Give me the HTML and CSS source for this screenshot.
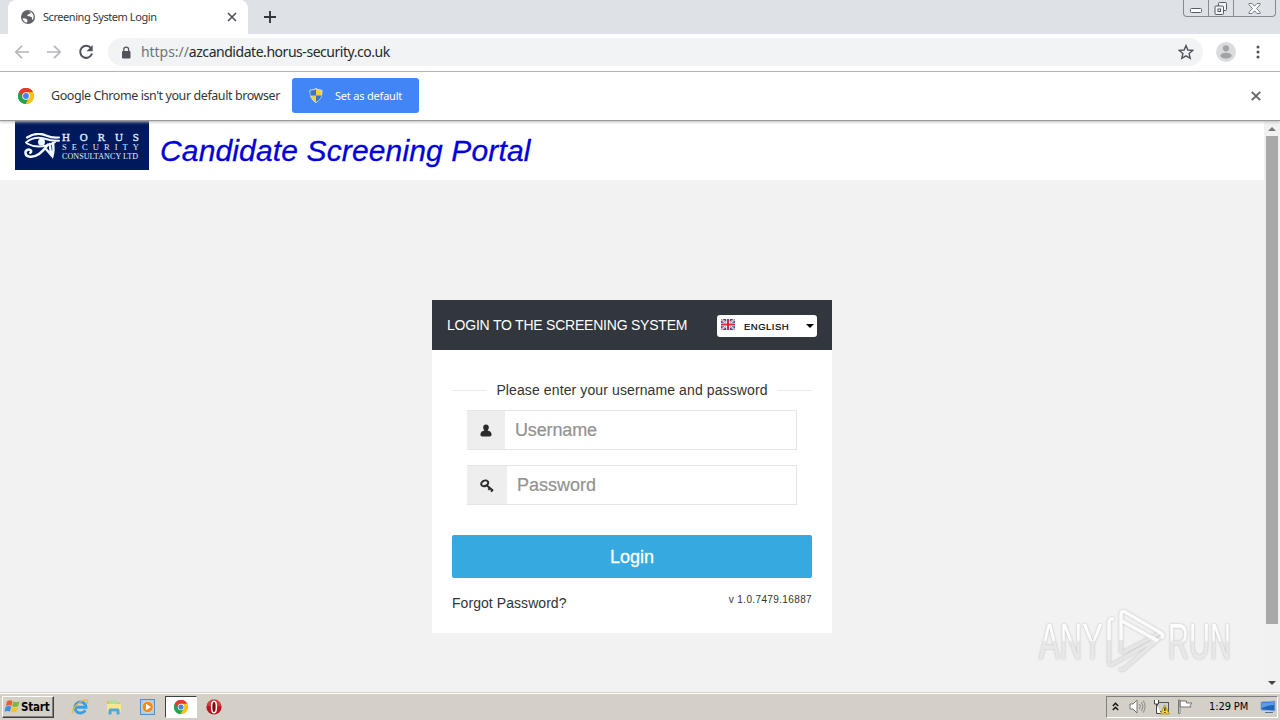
FILE: index.html
```html
<!DOCTYPE html>
<html lang="en">
<head>
<meta charset="utf-8">
<title>Screening System Login</title>
<link rel="stylesheet" href="styles.css">
</head>
<body>
<svg class="defs" width="0" height="0">
  <symbol id="chrome" viewBox="0 0 24 24">
    <path fill="#e33b2e" d="M12 12 1.6 6A12 12 0 0 1 22.4 6z"/>
    <path fill="#fbc116" d="M12 12 22.4 6A12 12 0 0 1 12 24z"/>
    <path fill="#27a34a" d="M12 12v12A12 12 0 0 1 1.6 6z"/>
    <path fill="#e33b2e" d="M12 6.5h10.7A12 12 0 0 0 1.6 6L7 14.5z"/>
    <path fill="#27a34a" d="M1.600 6A12 12 0 0 0 11.500 24L17 14.500 12 17.500 7 14.500z"/>
    <path fill="#fbc116" d="M12 6.5h10.7A12 12 0 0 1 11.5 24l5.5-9.5z"/>
    <circle cx="12" cy="12" r="5.6" fill="#fff"/><circle cx="12" cy="12" r="4.4" fill="#4285e8"/>
  </symbol>
</svg>

<header class="tabstrip">
  <div class="tab">
    <svg class="globe" viewBox="0 0 16 16"><circle cx="8" cy="8" r="7" fill="#5f6368"/><path fill="#fff" d="M2.5 9.2 5.8 9.4 7.4 11l-.3 2.7C4.500 13.300 2.900 11.500 2.500 9.200zM8.500 2.400l2.200.7-.4 1.500-2 .6L7 7 9.500 7.300l2.700 1.200-.3 2.200 1.100-.1c.9-1.900.8-4-.5-6l-1.500-1.500C10.300 2.400 9.400 2.200 8.500 2.400z"/></svg>
    <span class="tab-title">Screening System Login</span>
    <svg class="tab-close" viewBox="0 0 10 10"><path d="M1 1l8 8M9 1 1 9" stroke="#50545a" stroke-width="1.700"/></svg>
  </div>
  <svg class="plus" viewBox="0 0 12 12"><path d="M6 0v12M0 6h12" stroke="#33373c" stroke-width="1.900"/></svg>
  <div class="win-controls">
    <span class="wc wc-min"><svg width="12" height="5" viewBox="0 0 12 5"><rect x=".5" y=".5" width="11" height="4" rx="1" fill="#fff" stroke="#555b66"/></svg></span>
    <span class="wc wc-max"><svg width="14" height="13" viewBox="0 0 14 13"><g fill="#f3f4f6" stroke="#555b66"><rect x="4.500" y=".5" width="8" height="8" rx="1"/><rect x="1" y="4" width="8.500" height="8.500" rx="1"/><rect x="4" y="7" width="2.500" height="2.500"/></g></svg></span>
    <span class="wc wc-close"><svg width="13" height="11" viewBox="0 0 13 11"><path d="M1 .5h3l2.500 2.700L9 .5h3v1.300L8.500 5.500 12 9.200v1.300H9L6.500 7.800 4 10.500H1V9.200l3.500-3.700L1 1.800z" fill="#fff" stroke="#666c76" stroke-width=".9"/></svg></span>
  </div>
</header>

<nav class="toolbar">
  <svg class="nav-ic" viewBox="0 0 16 16"><path d="M15 8H2M8 1.800 1.800 8 8 14.200" fill="none" stroke="#b5b7ba" stroke-width="1.700"/></svg>
  <svg class="nav-ic" viewBox="0 0 16 16"><path d="M1 8h13M8 1.800 14.200 8 8 14.200" fill="none" stroke="#b5b7ba" stroke-width="1.700"/></svg>
  <svg class="nav-ic" viewBox="0 0 16 16"><path d="M13 4.200A6 6 0 1 0 14 9.500" fill="none" stroke="#50545a" stroke-width="2"/><path d="M14.700 1v6.300H8.500z" fill="#50545a"/></svg>
  <div class="omnibox">
    <svg class="lock" viewBox="0 0 10 13"><rect x="1" y="5" width="8.500" height="7.500" rx="1" fill="#50545a"/><path d="M2.800 5.500V3.500a2.400 2.400 0 0 1 4.800 0v2" fill="none" stroke="#50545a" stroke-width="1.300"/></svg>
    <span class="url"><span class="scheme">https://</span>azcandidate.horus-security.co.uk</span>
    <svg class="star" viewBox="0 0 16 16"><path d="M8 1.600 9.900 6l4.800.4-3.600 3.200 1.100 4.700L8 11.800l-4.200 2.500 1.100-4.700L1.300 6.400 6.100 6z" fill="none" stroke="#50545a" stroke-width="1.400"/></svg>
  </div>
  <svg class="avatar" viewBox="0 0 20 20"><circle cx="10" cy="10" r="10" fill="#dadbdc"/><circle cx="10" cy="6.300" r="3.100" fill="#a2a3a5"/><path d="M4.300 14c0-2.500 3-3.300 5.700-3.300s5.700.8 5.700 3.300c-1.200 1.800-3.200 2.600-5.700 2.600S5.500 15.800 4.300 14z" fill="#a2a3a5"/></svg>
  <svg class="kebab" viewBox="0 0 4 14"><g fill="#50545a"><circle cx="2" cy="2" r="1.500"/><circle cx="2" cy="7" r="1.500"/><circle cx="2" cy="12" r="1.500"/></g></svg>
</nav>

<div class="infobar">
  <svg class="info-chrome"><use href="#chrome"/></svg>
  <span class="info-text">Google Chrome isn't your default browser</span>
  <button class="default-btn">
    <svg width="14" height="15" viewBox="0 0 14 15"><path d="M7 .5c2 1.200 4 1.600 6 1.600 0 5.500-1 9.500-6 12.400C2 11.600 1 7.600 1 2.100c2 0 4-.4 6-1.600z" fill="#f5cf3c" stroke="#d9dfe6" stroke-width="1"/><path d="M7 1.200v6.300H1.500C1.300 6 1.400 4 1.400 2.500 3.500 2.500 5 2.200 7 1.200zM7 7.500h5.400c-.6 3-2.400 5-5.400 6.500z" fill="#3378c9"/></svg>
    <span>Set as default</span>
  </button>
  <svg class="info-close" viewBox="0 0 10 10"><path d="M.8.8l8.400 8.400M9.200.8.800 9.200" stroke="#60646a" stroke-width="1.900"/></svg>
</div>

<main class="viewport">
  <div class="page">
    <div class="site-header">
      <div class="logo">
        <svg class="eye" viewBox="0 0 37 27"><g fill="none" stroke="#f2f8ff" stroke-linecap="round"><path d="M3 4.500C9 .8 16-.2 22 2.500c5 2.300 8 2.500 13 2" stroke-width="2.200"/><path d="M2 9.500C7 5.500 14 4 20 5.500c6 2 10 2.800 15 2.200" stroke-width="2"/><path d="M3 10.500c8 4.500 18 3.800 28-1.300" stroke-width="2"/><path d="M24 11.500C19 18.500 12 25 5 23.500c-4.500-1-4.500-6-1-6.800 2.800-.5 4 1.800 2.300 3" stroke-width="2.500"/><path d="M26 11c0 4 .3 8 2.500 12 1.200-4 1.300-8 .5-13M22 16l6 7" stroke-width="2.400"/></g><circle cx="17.500" cy="9" r="3.500" fill="#f2f8ff"/></svg>
        <div class="logo-text">
          <span class="l1"><i>H</i><i>O</i><i>R</i><i>U</i><i>S</i></span>
          <span class="l2"><i>S</i><i>E</i><i>C</i><i>U</i><i>R</i><i>I</i><i>T</i><i>Y</i></span>
          <span class="l3">CONSULTANCY LTD</span>
        </div>
      </div>
      <h1>Candidate Screening Portal</h1>
    </div>
    <section class="card">
      <div class="card-head">
        <span class="card-title">LOGIN TO THE SCREENING SYSTEM</span>
        <div class="lang">
          <svg width="14" height="11" viewBox="0 0 14 11"><rect width="14" height="11" fill="#34459a"/><path d="M0 0l14 11M14 0 0 11" stroke="#fff" stroke-width="1.800"/><path d="M0 0l14 11M14 0 0 11" stroke="#d23b50" stroke-width=".7"/><path d="M7 0v11M0 5.500h14" stroke="#fff" stroke-width="3.600"/><path d="M7 0v11M0 5.500h14" stroke="#d2283e" stroke-width="2"/></svg>
          <span>ENGLISH</span>
          <b class="caret"></b>
        </div>
      </div>
      <div class="card-body">
        <div class="divider"><span>Please enter your username and password</span></div>
        <div class="field field-user">
          <span class="addon"><svg width="12" height="13" viewBox="0 0 12 13"><path d="M6 .5c2 0 3 1.500 2.800 3.300C8.700 5 8.200 6 7.500 6.400 10 6.800 11.500 8 11.600 10.500c0 1.300-.8 2-2 2H2.400c-1.200 0-2-.7-2-2C.500 8 2 6.800 4.500 6.400 3.800 6 3.300 5 3.200 3.800 3 2 4 .5 6 .5z" fill="#2b2b2b"/></svg></span>
          <input type="text" placeholder="Username">
        </div>
        <div class="field field-pass">
          <span class="addon"><svg width="14" height="13" viewBox="0 0 14 13"><g fill="none" stroke="#2b2b2b" stroke-width="2"><ellipse cx="4.700" cy="4.300" rx="3.600" ry="2.700" transform="rotate(-25 4.700 4.300)"/><path d="M6.300 6 12.800 11.500M8.300 10.800l1.800-2M11 12.700l1.800-2"/></g></svg></span>
          <input type="password" placeholder="Password">
        </div>
        <button class="login">Login</button>
        <div class="card-foot"><a>Forgot Password?</a><span class="ver">v 1.0.7479.16887</span></div>
      </div>
    </section>
  </div>
  <div class="scrollbar"><b class="up"></b><span class="thumb"></span><b class="down"></b></div>
  <svg class="watermark" viewBox="0 0 206 70">
    <defs><linearGradient id="wg" gradientUnits="userSpaceOnUse" x1="0" y1="17" x2="0" y2="53"><stop offset="0" stop-color="#fff"/><stop offset=".48" stop-color="#fafafa"/><stop offset=".52" stop-color="#e8e8e8"/><stop offset="1" stop-color="#e9e9e9"/></linearGradient></defs>
    <g class="wm-text"><text x="5" y="53" textLength="64" lengthAdjust="spacingAndGlyphs" fill="url(#wg)">ANY</text><text x="134" y="53" textLength="63" lengthAdjust="spacingAndGlyphs" fill="url(#wg)">RUN</text></g>
    <g class="wm-mark" fill="none" stroke-width="3.500" stroke-linejoin="round"><path stroke="#e6e6e6" d="M75 34v22q0 4 4 2l44-25M87 34v13l0 0M128 30 90 63q-3 2-4-1M88 47l38-20"/><path stroke="#fbfbfb" d="M75 34V17q0-5 5-4M87 34V9q0-5 4-3l36 21q4 3 0 5M88 15l36 20"/></g>
  </svg>
</main>

<footer class="taskbar">
  <div class="start">
    <svg width="17" height="15" viewBox="0 0 17 15"><path d="M3 2.500Q6 .5 8.500 2L7.400 7Q5 5.600 1.800 7z" fill="#e6602b"/><path d="M9.300 2.300Q12 4 15.600 2.200L14.300 7Q11 8.700 8.200 7.200z" fill="#7cb83d"/><path d="M1.600 7.800Q5 6.300 7.200 7.800L6 12.500Q3.500 11.300.5 12.600z" fill="#3f8fdc"/><path d="M8 8Q11 9.600 14.100 7.900L12.800 12.500Q10 14.300 6.800 12.800z" fill="#f5c22f"/></svg>
    <span>Start</span>
  </div>
  <div class="quick">
    <svg class="q" viewBox="0 0 18 18"><path d="M14.300 12.200A5.600 5.600 0 1 1 15 9.300H5" fill="none" stroke="#3d9fde" stroke-width="2.900"/><path d="M1.500 15.500C-.5 12 9 1.500 15.500 1.800c2 .2 1.500 2.500.5 4" fill="none" stroke="#e4ba3a" stroke-width="1.200"/></svg>
    <svg class="q" viewBox="0 0 18 18"><path d="M2 3h5l1 1.500h7V14H2z" fill="#e2c054"/><path d="M4 2h8v5H4z" fill="#b5dda3"/><path d="M2 6h14v8H2z" fill="#f7e592"/><path d="M3.500 16.500v-4q0-2 2-2h7q2 0 2 2v4h-3v-3h-5v3z" fill="#4fa6db"/></svg>
    <svg class="q" viewBox="0 0 18 18"><rect x="1.500" y="1.500" width="14" height="15" fill="#a6cdef" stroke="#5591c9"/><circle cx="8.700" cy="9" r="5.700" fill="#f28a1c" stroke="#fff" stroke-width=".5"/><path d="M7 5.800v6.400L12 9z" fill="#fff"/></svg>
    <div class="active"><svg width="14" height="14"><use href="#chrome"/></svg></div>
    <svg class="q opera" viewBox="0 0 18 18"><circle cx="9" cy="9" r="7.600" fill="#bd1622"/><path d="M2 8a7 7 0 0 1 14 0z" fill="#df5a55" opacity=".6"/><ellipse cx="9" cy="9" rx="2.400" ry="5.700" fill="#7c0b12" stroke="#fff" stroke-width="1.500"/></svg>
  </div>
  <div class="tray">
    <svg width="7" height="9" viewBox="0 0 7 9"><path d="M.8 4 3.500 1.300 6.200 4M.8 8 3.500 5.300 6.200 8" fill="none" stroke="#111" stroke-width="1.400"/></svg>
    <svg class="spk" width="17" height="15" viewBox="0 0 17 15"><path d="M1 5h3l4-4v13l-4-4H1z" fill="#fff" stroke="#777"/><path d="M10.500 5q1.500 2.500 0 5M12.500 3q3 4.500 0 9M14.300 1.500q3.500 6 0 12" fill="none" stroke="#888"/></svg>
    <svg class="net" width="17" height="16" viewBox="0 0 17 16"><rect x="4.500" y="3.500" width="11" height="9" fill="#ccd0ce" stroke="#555"/><path d="M1.500 1v4h4V1M3.500 5v9.500H8" fill="#fff" stroke="#444"/><path d="M11.500 6 16.500 15h-9z" fill="#f7d426" stroke="#9c8410" stroke-width=".7"/><path d="M11.900 8.500v3.500M11.900 13v1" stroke="#222" stroke-width="1.200"/></svg>
    <svg class="flag" width="17" height="15" viewBox="0 0 17 15"><path d="M1.500 1v13.500h1.500V1zM3 2h6.500v2H15l-2 2.500 1 1.500H9V8H3z" fill="#fff" stroke="#777"/></svg>
    <span class="clock">1:29 PM</span>
    <svg class="desk" width="16" height="14" viewBox="0 0 16 14"><path d="M1 2l14-1v10L1 10z" fill="#2262b8" stroke="#8ab1df"/><path d="M2 3l12-1v3Q8 5 2 8z" fill="#609ce0"/><path d="M5 12.500h8" stroke="#547696"/></svg>
  </div>
</footer>
</body>
</html>
```
FILE: styles.css
```css
* { box-sizing: border-box; }
body { margin: 0; width: 1280px; height: 720px; overflow: hidden; display: flex; flex-direction: column; font-family: "Liberation Sans", Arial, sans-serif; background: #fff; }
svg { display: block; flex: none; }
span, h1 { white-space: nowrap; }
.defs { position: absolute; }

.tabstrip { height: 34px; flex: none; background: #dee1e6; display: flex; align-items: center; padding-left: 8px; }
.tab { width: 240px; height: 34px; background: #fff; border-radius: 8px 8px 0 0; display: flex; align-items: center; padding: 0 11px 0 12px; }
.globe { width: 16px; height: 16px; }
.tab-title { margin: -1px 0 0 7px; flex: 1; font: 11px "Noto Sans", sans-serif; letter-spacing: -.44px; color: #33373c; }
.tab-close { width: 10px; height: 10px; }
.plus { width: 12px; height: 12px; margin-left: 16px; }
.win-controls { margin: 0 4px 0 auto; align-self: flex-start; display: flex; height: 17px; width: 93px; border: 1px solid #858a94; border-top: 0; border-radius: 0 0 4px 4px; }
.wc { display: flex; justify-content: center; align-items: center; border-right: 1px solid #858a94; }
.wc-min { width: 25px; padding-top: 5px; }
.wc-max { width: 25px; }
.wc-close { flex: 1; border: 0; }

.toolbar { height: 38px; flex: none; display: flex; align-items: center; padding: 0 18px 1px 14px; border-bottom: 1px solid #b2b4b5; }
.nav-ic { width: 16px; height: 16px; margin-right: 16px; }
.omnibox { width: 1095px; height: 28px; margin-left: -2px; border-radius: 14px; background: #f1f3f4; display: flex; align-items: center; padding: 0 9px 0 13px; }
.lock { width: 10px; height: 13px; }
.url { flex: 1; margin: -2px 0 0 10px; font: 14px "Noto Sans", sans-serif; letter-spacing: -.38px; color: #26292d; }
.scheme { color: #70757a; letter-spacing: -.05px; }
.url { letter-spacing: -.46px; }
.star { width: 16px; height: 16px; }
.avatar { width: 20px; height: 20px; margin-left: 13px; }
.kebab { width: 4px; height: 14px; margin-left: auto; margin-right: 2px; }

.infobar { height: 49px; flex: none; display: flex; align-items: center; padding: 0 19px 1px 18px; border-bottom: 1px solid #999; box-shadow: 0 1px 3px #bbb; position: relative; z-index: 2; }
.info-chrome { width: 16px; height: 16px; }
.info-text { width: 241px; margin-left: 17px; font: 12.5px "Noto Sans", sans-serif; letter-spacing: -.42px; color: #33373c; }
.default-btn { width: 127px; height: 35px; border: 0; border-radius: 3px; background: #4285f4; color: #fff; display: flex; align-items: center; gap: 12px; padding: 0 0 1px 17px; font: 11px "Noto Sans", sans-serif; letter-spacing: -.2px; }
.info-close { width: 10px; height: 10px; margin-left: auto; }

.viewport { flex: 1; min-height: 0; display: flex; position: relative; }
.page { flex: 1; background: #f2f2f2; display: flex; flex-direction: column; }
.site-header { height: 59px; background: #fff; display: flex; padding-left: 15px; }
.logo { width: 134px; height: 49px; background: #00195c; display: flex; color: #e9f2ff; padding: 12px 0 0 9px; }
.eye { width: 37px; height: 27px; }
.logo-text { width: 77px; margin-left: 1px; font-family: "Liberation Serif", serif; display: flex; flex-direction: column; }
.logo-text span { display: flex; justify-content: space-between; }
.logo-text i { font-style: normal; }
.l1 { font-size: 11px; line-height: 9px; -webkit-text-stroke: .3px; }
.l2 { font-size: 8.500px; line-height: 10px; }
.l3 { font-size: 8px; line-height: 9px; letter-spacing: .1px; }
h1 { margin: 11px 0 0 11px; font-size: 30px; line-height: 38px; font-style: italic; font-weight: 400; color: #0000dc; letter-spacing: .14px; -webkit-text-stroke: .3px; }

.card { width: 400px; height: 333px; margin: 120px auto 0; background: #fff; }
.card-head { height: 50px; background: #32363d; display: flex; align-items: center; justify-content: space-between; padding: 0 15px; }
.card-title { color: #fff; font-size: 14px; letter-spacing: -.22px; }
.lang { width: 100px; height: 22px; margin-top: 1px; background: #fff; border-radius: 3px; display: flex; align-items: center; padding: 0 3px 0 4px; font-size: 9.500px; color: #000; letter-spacing: .5px; -webkit-text-stroke: .2px; }
.lang svg { margin-top: -2px; }
.lang span { margin: 1px 0 0 9px; }
.caret { margin-left: auto; border: 4px solid transparent; border-top-color: #000; border-bottom: 0; }
.card-body { padding: 30px 20px 0; display: flex; flex-direction: column; }
.divider { height: 20px; display: flex; align-items: center; gap: 9px; font-size: 14px; color: #333; letter-spacing: .11px; }
.divider::before, .divider::after { content: ""; flex: 1; height: 1px; background: #eaeaea; }
.field { height: 40px; margin: 10px 15px 0; border: 1px solid #e5e5e5; border-left-color: #eee; display: flex; }
.field-pass { margin-top: 15px; }
.addon { width: 37px; padding-right: 2px; background: #eee; display: flex; align-items: center; justify-content: center; }
.field-pass .addon { width: 39px; }
input { flex: 1; min-width: 0; border: 0; background: #fff; padding: 0 10px; font: 18px "Liberation Sans", Arial, sans-serif; }
input::placeholder { color: #929292; opacity: 1; -webkit-text-stroke: .2px; }
.field-user input { letter-spacing: -.15px; }
.login { height: 43px; margin-top: 30px; border: 0; border-radius: 2px; background: #36a9e1; color: #fff; font: 18px "Liberation Sans", Arial, sans-serif; padding: 2px 0 0; -webkit-text-stroke: .3px; }
.card-foot { margin-top: 17px; display: flex; justify-content: space-between; font-size: 14px; line-height: 16px; color: #333; letter-spacing: .06px; }
.ver { font-size: 10px; line-height: 10px; letter-spacing: .37px; }

.scrollbar { width: 16px; background: #f1f1f1; display: flex; flex-direction: column; align-items: center; padding: 6px 0 7px; }
.up { border: 4px solid transparent; border-bottom-color: #777; border-top: 0; }
.thumb { width: 12px; height: 488px; margin-top: 5px; background: #a8a8a8; }
.down { margin-top: auto; border: 4px solid transparent; border-top-color: #444; border-bottom: 0; }
.watermark { position: absolute; left: 1034px; top: 485px; width: 206px; height: 70px; overflow: visible; filter: drop-shadow(0 0 1px #bbb); }
.wm-text { font: 50px "Liberation Sans", sans-serif; }

.taskbar { height: 28px; flex: none; background: #d4d0c8; border-top: 1px solid #d4d0c8; box-shadow: inset 0 1px #fff; display: flex; align-items: center; padding: 0 2px; }
.start { width: 52px; height: 22px; display: flex; align-items: center; gap: 0; border: 1px solid; border-color: #fff #404040 #404040 #fff; box-shadow: inset -1px -1px #808080; font: bold 11.500px "DejaVu Sans Condensed", sans-serif; padding-left: 1px; letter-spacing: -.2px; }
.quick { display: flex; align-items: center; margin-left: 17px; }
.q { width: 18px; height: 18px; margin-right: 16px; }
.active { width: 32px; height: 22px; margin-left: -8px; background: #fff; border: 1px solid; border-color: #404040 #fff #fff #404040; display: flex; align-items: center; justify-content: center; }
.opera { margin: 0 0 0 8px; }
.tray { width: 172px; height: 22px; margin-left: auto; border: 1px solid; border-color: #808080 #fff #fff #808080; display: flex; align-items: center; padding: 0 1px 0 5px; }
.spk { margin-left: 10px; }
.net { margin-left: 7px; }
.flag { margin-left: 7px; }
.clock { margin-left: 15px; font: 11px "DejaVu Sans Condensed", sans-serif; letter-spacing: -.1px; color: #000; }
.desk { margin-left: auto; }
```
